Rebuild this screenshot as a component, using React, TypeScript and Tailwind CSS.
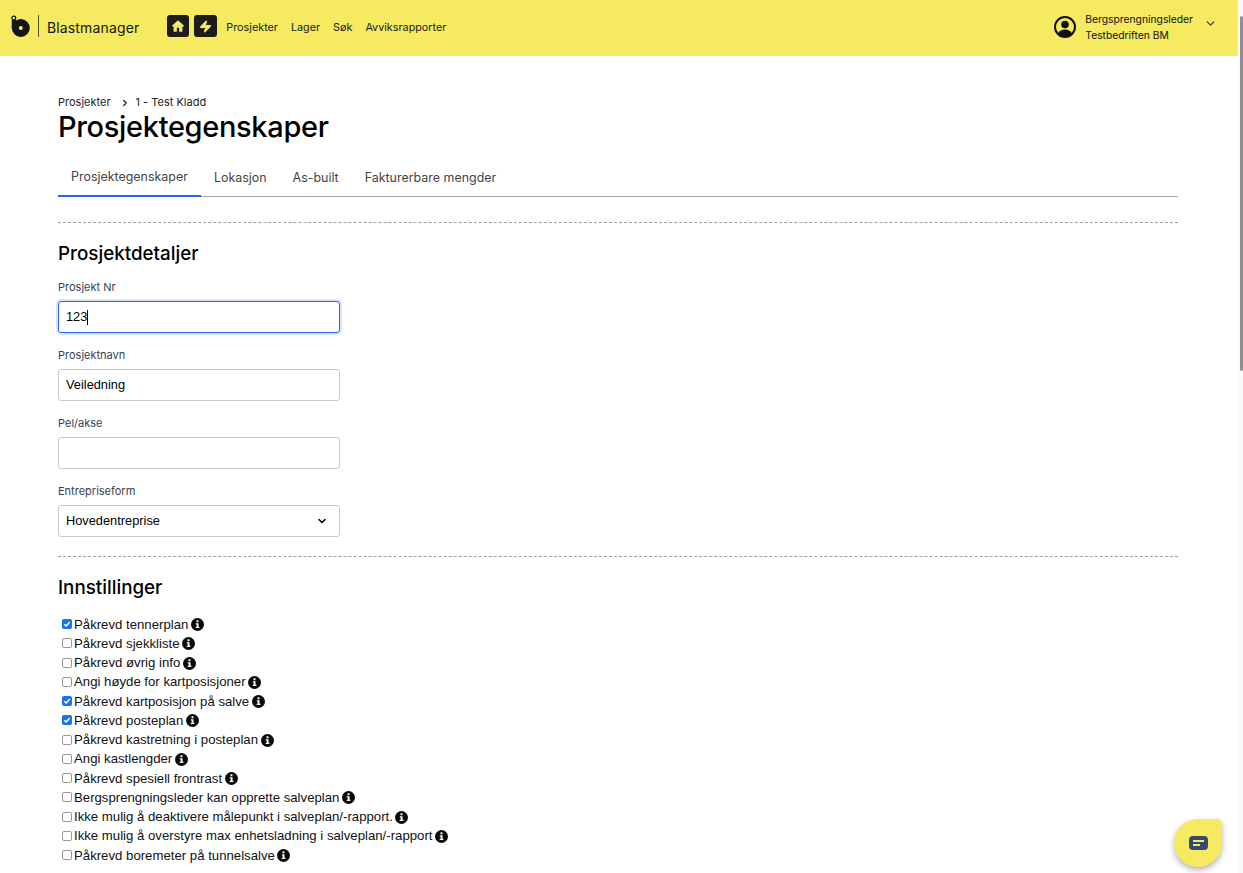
import { ChevronDown, ChevronRight, Zap } from 'lucide-react'

const navLinks = ['Prosjekter', 'Lager', 'Søk', 'Avviksrapporter']
const tabs = ['Prosjektegenskaper', 'Lokasjon', 'As-built', 'Fakturerbare mengder']

const settings = [
  { label: 'Påkrevd tennerplan', checked: true },
  { label: 'Påkrevd sjekkliste', checked: false },
  { label: 'Påkrevd øvrig info', checked: false },
  { label: 'Angi høyde for kartposisjoner', checked: false },
  { label: 'Påkrevd kartposisjon på salve', checked: true },
  { label: 'Påkrevd posteplan', checked: true },
  { label: 'Påkrevd kastretning i posteplan', checked: false },
  { label: 'Angi kastlengder', checked: false },
  { label: 'Påkrevd spesiell frontrast', checked: false },
  { label: 'Bergsprengningsleder kan opprette salveplan', checked: false },
  { label: 'Ikke mulig å deaktivere målepunkt i salveplan/-rapport.', checked: false },
  { label: 'Ikke mulig å overstyre max enhetsladning i salveplan/-rapport', checked: false },
  { label: 'Påkrevd boremeter på tunnelsalve', checked: false },
]

function Logo() {
  return (
    <svg width="19" height="22" viewBox="0 0 19 22" fill="none">
      <circle cx="2.800" cy="3" r="1.900" stroke="#161616" strokeWidth="1.200" />
      <path d="M2.800 5v8" stroke="#161616" strokeWidth="4.200" />
      <circle cx="9.800" cy="13" r="5.500" stroke="#161616" strokeWidth="7" />
    </svg>
  )
}

function HomeIcon() {
  return (
    <svg width="14" height="14" viewBox="0 0 24 24" fill="#f5ea60">
      <path d="M12 2 2 11v2h2.500v9h5.500v-7h4v7h5.500v-9H22v-2z" />
    </svg>
  )
}

function UserIcon() {
  return (
    <svg width="24" height="24" viewBox="0 0 24 24">
      <circle cx="12" cy="12" r="10" fill="none" stroke="#111" strokeWidth="2" />
      <circle cx="12" cy="9.500" r="3.800" fill="#111" />
      <path d="M5 18.500c1.500-3 4-4 7-4s5.500 1 7 4c-2 2.300-4.500 3.500-7 3.500s-5-1.200-7-3.500z" fill="#111" />
    </svg>
  )
}

function InfoIcon() {
  return (
    <svg width="13" height="13" viewBox="0 0 13 13" className="shrink-0">
      <circle cx="6.500" cy="6.500" r="6.500" fill="#0a0a0a" />
      <rect x="5.500" y="2.300" width="2" height="2" rx="0.500" fill="#fff" />
      <path d="M4.800 5.300h2.700v3.500h0.900v1.100H4.700V8.800h1V6.400h-0.900z" fill="#fff" />
    </svg>
  )
}

function Field({ label, value, focused }: { label: string; value: string; focused?: boolean }) {
  return (
    <div className="w-[282px]">
      <div className="h-[17px] text-[11px] leading-[17px] text-[#374151]">{label}</div>
      <div
        className={
          focused
            ? 'mt-[5px] flex h-[32px] items-center rounded-[3px] border border-[#2563eb] px-[7px] ring-2 ring-[#dbe6fb]'
            : 'mt-[5px] flex h-[32px] items-center rounded-[3px] border border-[#c9c9c9] px-[7px]'
        }
      >
        <span className="font-['Liberation_Sans',sans-serif] text-[12.800px] text-black">{value}</span>
        {focused && <span className="h-[15px] w-px bg-black" />}
      </div>
    </div>
  )
}

function Setting({ label, checked }: { label: string; checked: boolean }) {
  return (
    <div className="flex h-[19.250px] items-center">
      <span
        className={
          checked
            ? 'mb-px ml-[3.500px] flex h-[10px] w-[10px] items-center justify-center rounded-[2px] bg-[#1a73e8]'
            : 'mb-px ml-[3.500px] h-[10px] w-[10px] rounded-[2px] border border-[#989898] bg-white'
        }
      >
        {checked && (
          <svg width="8" height="8" viewBox="0 0 8 8" fill="none">
            <path d="M1.300 4.200 3.200 6 6.800 1.900" stroke="#fff" strokeWidth="1.500" />
          </svg>
        )}
      </span>
      <span className="mr-[2.500px] ml-[2.500px] font-['Liberation_Sans',sans-serif] text-[13.200px] text-[#111]">
        {label}
      </span>
      <InfoIcon />
    </div>
  )
}

export default function App() {
  return (
    <div className="flex h-[873px] overflow-hidden bg-white font-['Inter',sans-serif] text-black">
      <div className="w-[1238px] shrink-0">
        <header className="flex h-[56px] items-center bg-[#f5ea60] pr-[21px] pl-[11px]">
          <div className="mb-[4px]">
            <Logo />
          </div>
          <div className="mb-[4px] ml-[8px] h-[22px] w-px bg-[#55512a]" />
          <div className="mb-[2px] ml-[8px] text-[14px] tracking-[0.14px] text-[#161616]">Blastmanager</div>
          <div className="mb-[4px] ml-[28px] flex gap-[5px]">
            <div className="flex h-[22px] w-[22px] items-center justify-center rounded-[3px] bg-[#1c1c1c]">
              <HomeIcon />
            </div>
            <div className="flex h-[22px] w-[23px] items-center justify-center rounded-[3px] bg-[#1c1c1c]">
              <Zap size={13} fill="#f5ea60" stroke="#f5ea60" />
            </div>
          </div>
          <nav className="ml-[9px] flex gap-[13px] text-[10.800px] text-[#1c1c1c]">
            {navLinks.map((link) => (
              <span key={link}>{link}</span>
            ))}
          </nav>
          <div className="mb-[3px] ml-auto flex items-center">
            <UserIcon />
            <div className="ml-[8px] text-[10.300px] leading-[16px] text-[#111]">
              <div>Bergsprengningsleder</div>
              <div>Testbedriften BM</div>
            </div>
            <ChevronDown size={13} className="mb-[6px] ml-[11px] text-[#333]" />
          </div>
        </header>

        <main className="pt-[39px] pr-[60px] pl-[58px]">
          <div className="flex h-[15px] items-center text-[11px] text-[#222]">
            <span>Prosjekter</span>
            <ChevronRight size={10} strokeWidth={3} className="mr-[6px] ml-[9px]" />
            <span>1 - Test Kladd</span>
          </div>
          <h1 className="h-[36px] text-[29px] leading-[33px] font-medium tracking-[-0.33px]">Prosjektegenskaper</h1>

          <div className="mt-[14px] flex h-[37px] border-b border-[#a8a8a8] text-[12.450px] text-[#444]">
            {tabs.map((tab, i) => (
              <div
                key={tab}
                className={
                  i === 0
                    ? 'mb-[-1px] flex h-[37px] items-center border-b-2 border-[#2563eb] px-[13px]'
                    : 'flex h-[36px] items-center px-[13px]'
                }
              >
                {tab}
              </div>
            ))}
          </div>

          <div className="mt-[25px] border-t border-dashed border-[#a0a0a0]" />
          <h2 className="mt-[19px] h-[24px] text-[18.800px] leading-[24px] font-medium">Prosjektdetaljer</h2>

          <div className="mt-[13px] flex flex-col gap-[14px]">
            <Field label="Prosjekt Nr" value="123" focused />
            <Field label="Prosjektnavn" value="Veiledning" />
            <Field label="Pel/akse" value="" />
            <div className="w-[282px]">
              <div className="h-[17px] text-[11px] leading-[17px] text-[#374151]">Entrepriseform</div>
              <div className="mt-[5px] flex h-[32px] items-center justify-between rounded-[3px] border border-[#c9c9c9] pr-[11px] pl-[7px]">
                <span className="font-['Liberation_Sans',sans-serif] text-[12.800px] text-black">Hovedentreprise</span>
                <ChevronDown size={12} strokeWidth={3} />
              </div>
            </div>
          </div>

          <div className="mt-[19px] border-t border-dashed border-[#a0a0a0]" />
          <h2 className="mt-[19px] h-[24px] text-[18.800px] leading-[24px] font-medium">Innstillinger</h2>

          <div className="mt-[15px]">
            {settings.map((s) => (
              <Setting key={s.label} label={s.label} checked={s.checked} />
            ))}
          </div>
        </main>
      </div>

      <div className="w-[5px] shrink-0 bg-[#fafafa] pt-[16px] pl-[2px]">
        <div className="h-[355px] rounded-sm bg-[#8f8f8f]" />
      </div>

      <div className="fixed right-[21px] bottom-[6px] flex h-[48px] w-[48px] items-center justify-center rounded-[24px] rounded-tr-[5px] bg-[#f5ea60] shadow-[0_3px_6px_rgba(0,0,0,0.3)]">
        <svg width="19" height="15" viewBox="0 0 19 15">
          <rect width="19" height="14" rx="4" fill="#364a6e" />
          <rect x="4" y="4" width="11" height="2" fill="#f5ea60" />
          <rect x="4" y="8" width="7" height="2" fill="#f5ea60" />
        </svg>
      </div>
    </div>
  )
}
